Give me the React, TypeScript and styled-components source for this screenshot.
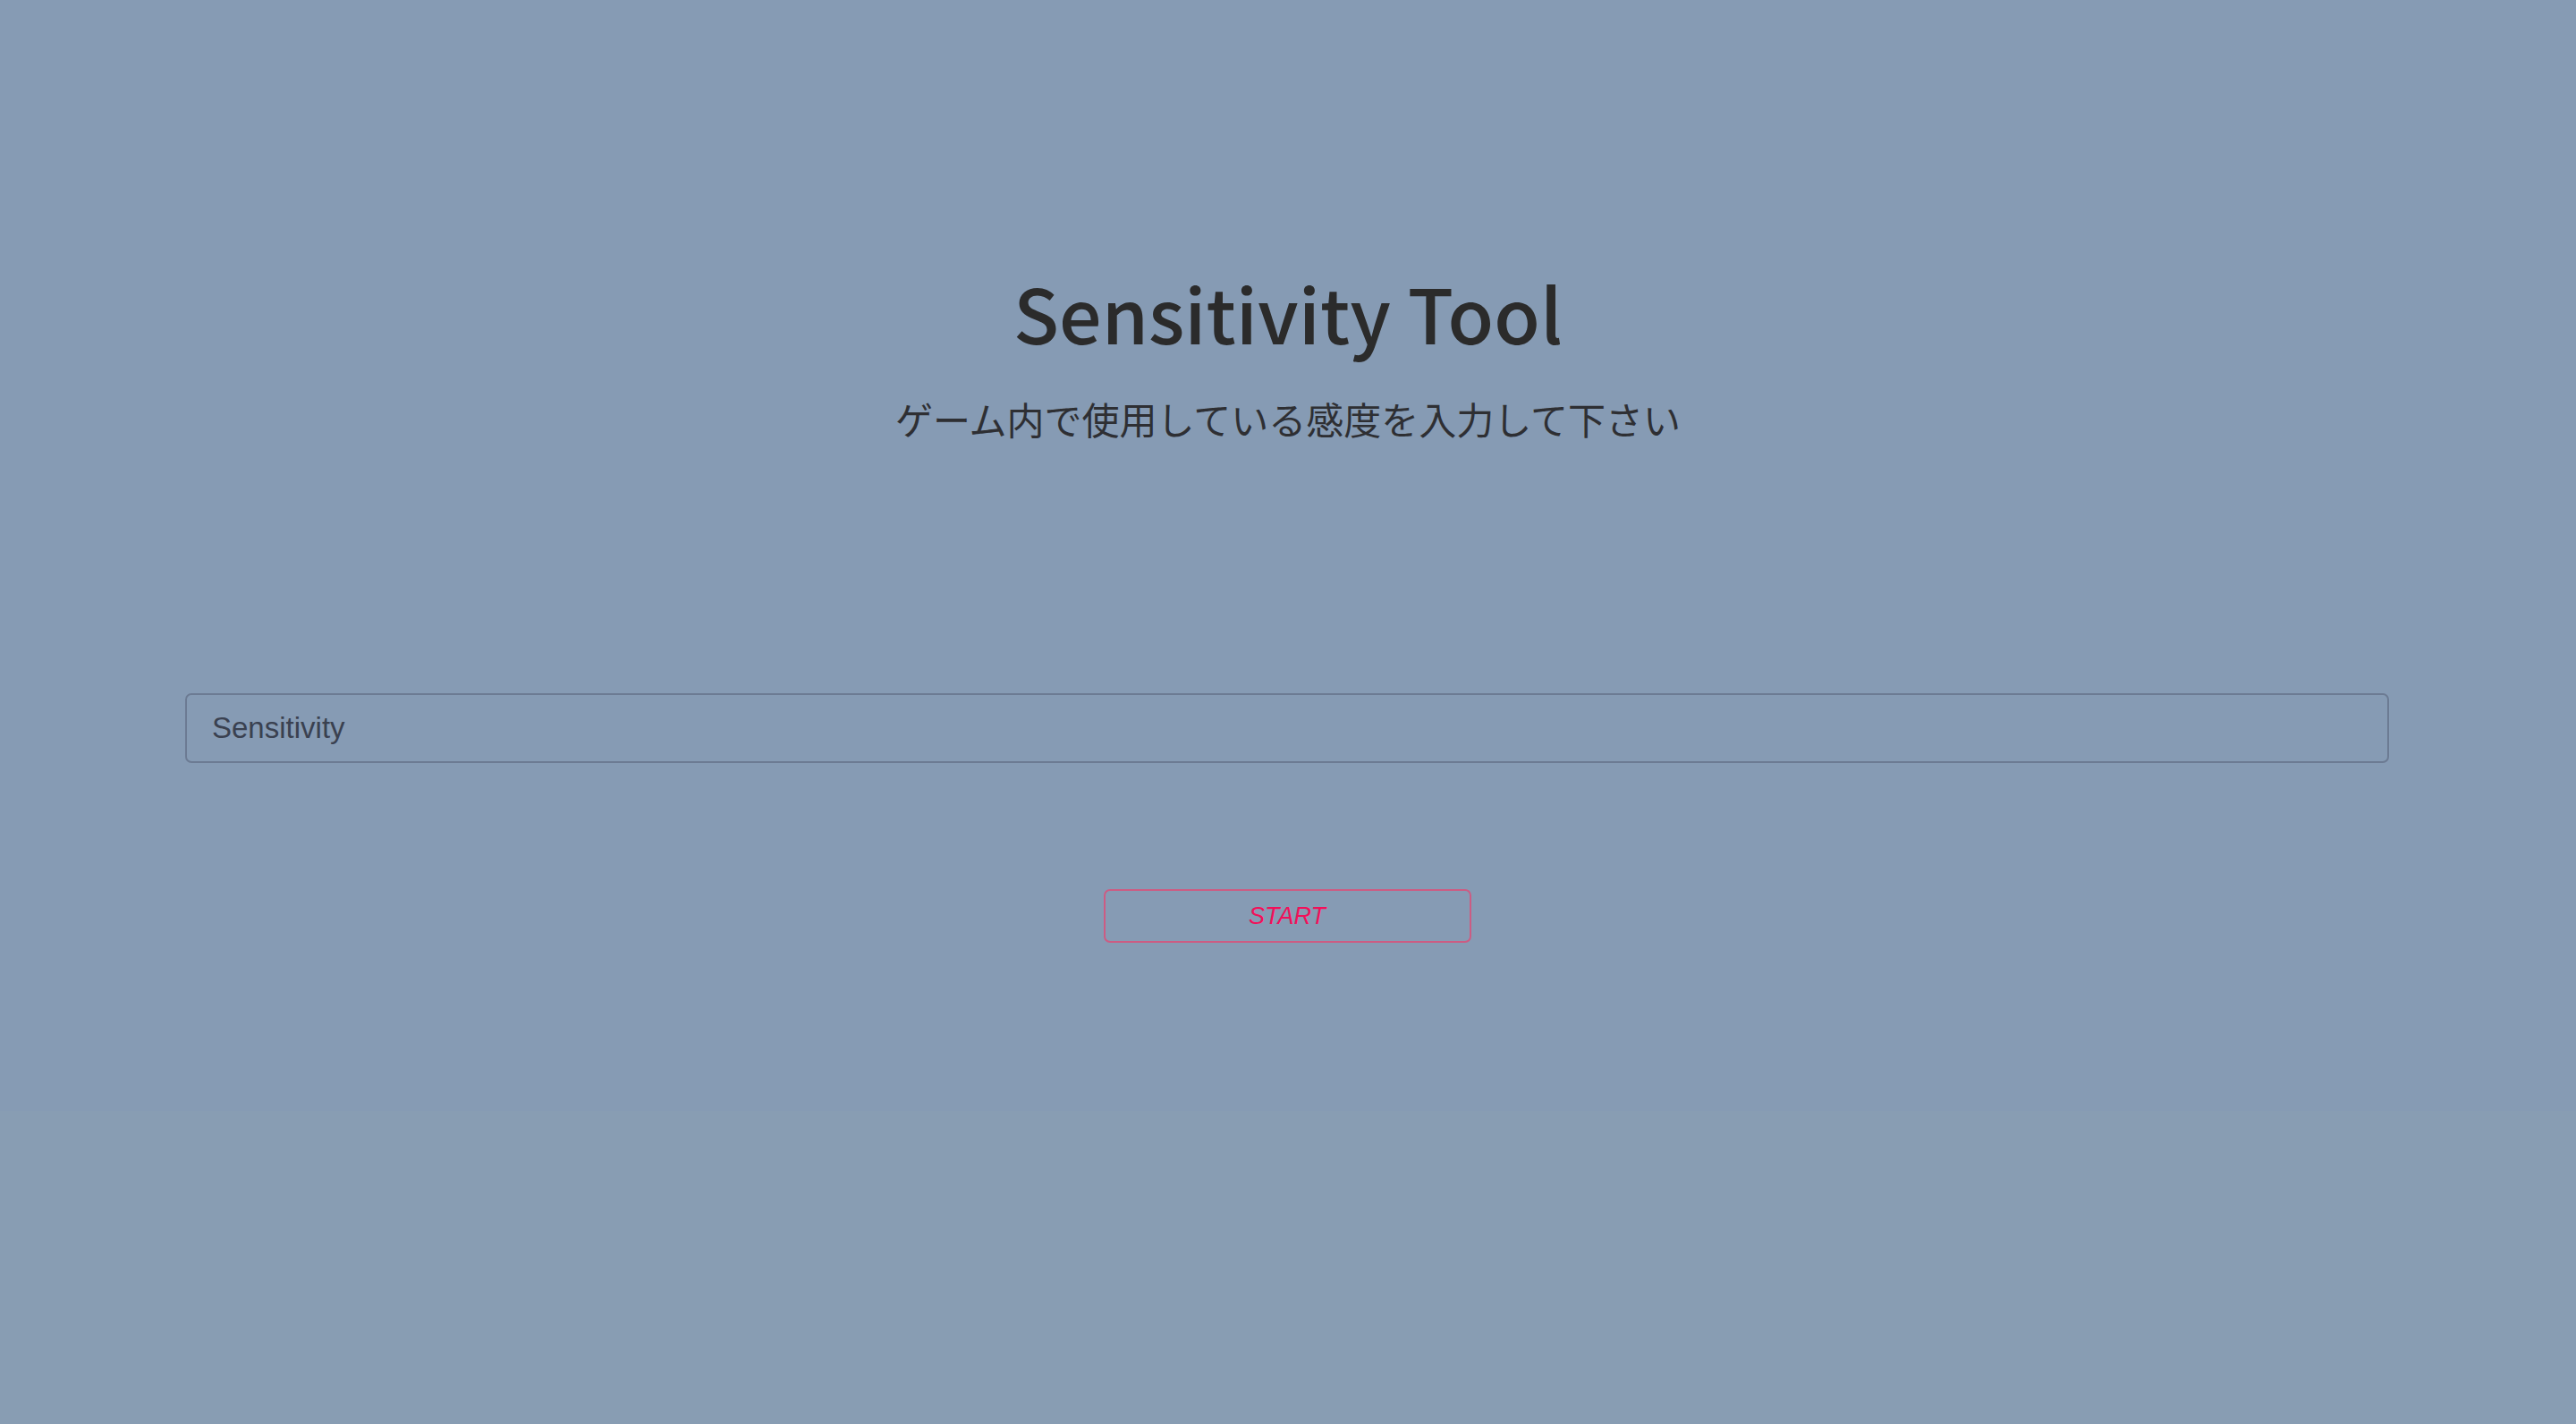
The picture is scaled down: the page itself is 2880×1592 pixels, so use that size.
import React from 'react';
import styled, { createGlobalStyle } from 'styled-components';

const GlobalStyle = createGlobalStyle`
  html, body {
    margin: 0;
    padding: 0;
    background: #889db3;
  }
  * {
    box-sizing: border-box;
  }
`;

const Page = styled.div`
  min-height: 1242px;
  background: #869bb4;
  display: flex;
  flex-direction: column;
  align-items: center;
  padding-top: 307px;
`;

const Title = styled.h1`
  margin: 0;
  font-family: 'Noto Sans CJK JP', 'Noto Sans', sans-serif;
  font-weight: 500;
  font-size: 84px;
  line-height: 1;
  color: #2b2b2b;
`;

const Subtitle = styled.p`
  margin: 56px 0 0;
  font-family: 'Noto Sans CJK JP', sans-serif;
  font-weight: 400;
  font-size: 42px;
  line-height: 1;
  color: #2e2f33;
`;

const Form = styled.form`
  width: 100%;
  padding: 0 209px 0 207px;
  margin-top: 286px;
  display: flex;
  flex-direction: column;
  align-items: center;
`;

const Input = styled.input`
  width: 100%;
  height: 78px;
  padding: 0 28px;
  border: 2px solid #6c7b93;
  border-radius: 7px;
  background: transparent;
  font-family: 'Liberation Sans', Arial, sans-serif;
  font-size: 33px;
  color: #383f4d;
  outline: none;

  &::placeholder {
    color: #3a4150;
    opacity: 1;
  }
`;

const StartButton = styled.button`
  margin-top: 141px;
  width: 411px;
  height: 60px;
  border: 2px solid #cc5c83;
  border-radius: 7px;
  background: transparent;
  font-family: 'Liberation Sans', Arial, sans-serif;
  font-style: italic;
  font-size: 27px;
  color: #f2105a;
  cursor: pointer;
`;

export default function App() {
  return (
    <>
      <GlobalStyle />
      <Page>
        <Title>Sensitivity Tool</Title>
        <Subtitle>ゲーム内で使用している感度を入力して下さい</Subtitle>
        <Form onSubmit={(e) => e.preventDefault()}>
          <Input type="text" placeholder="Sensitivity" />
          <StartButton type="submit">START</StartButton>
        </Form>
      </Page>
    </>
  );
}
